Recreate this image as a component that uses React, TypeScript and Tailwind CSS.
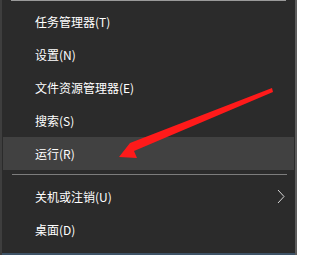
import React from "react";

const Row = ({ label, active, chevron }: { label: string; active?: boolean; chevron?: boolean }) => (
  <div
    className={`relative flex h-[33px] items-center pl-[32px] text-[12px] leading-none text-white ${
      active ? "bg-[#414141]" : ""
    }`}
  >
    <span>{label}</span>
    {chevron && (
      <svg className="absolute right-[9px] top-[9px]" width="8" height="15" viewBox="0 0 8 15">
        <path d="M1 1 L7 7.5 L1 14" fill="none" stroke="#d8d8d8" strokeWidth="1" />
      </svg>
    )}
  </div>
);

export default function App() {
  return (
    <div
      className="relative h-[255px] w-[297px] overflow-hidden bg-[#2b2b2b]"
      style={{ fontFamily: '"Noto Sans CJK SC", "Noto Sans", sans-serif' }}
    >
      <div className="flex h-full flex-col border-l-2 border-r-2 border-l-[#3e3e3e] border-r-[#5c5c5c]">
        <div className="ml-[9px] h-px w-[275px] bg-[#9a9a9a]" />
        <div className="flex flex-1 flex-col pt-[4px] pl-px pr-px">
          <Row label="任务管理器(T)" />
          <Row label="设置(N)" />
          <Row label="文件资源管理器(E)" />
          <Row label="搜索(S)" />
          <Row label="运行(R)" active />
          <div className="mt-[4px] mb-[5px] ml-[9px] h-px w-[275px] bg-[#7d7d7d]" />
          <Row label="关机或注销(U)" chevron />
          <Row label="桌面(D)" />
        </div>
        <div className="h-[2px] w-full bg-[#3d5266]" />
      </div>
      <svg className="absolute left-0 top-0" width="297" height="255" viewBox="0 0 297 255">
        <polygon
          points="272,88 130,143 119,157 137,158 134,151 273,92"
          fill="#ff1a1a"
        />
      </svg>
    </div>
  );
}
